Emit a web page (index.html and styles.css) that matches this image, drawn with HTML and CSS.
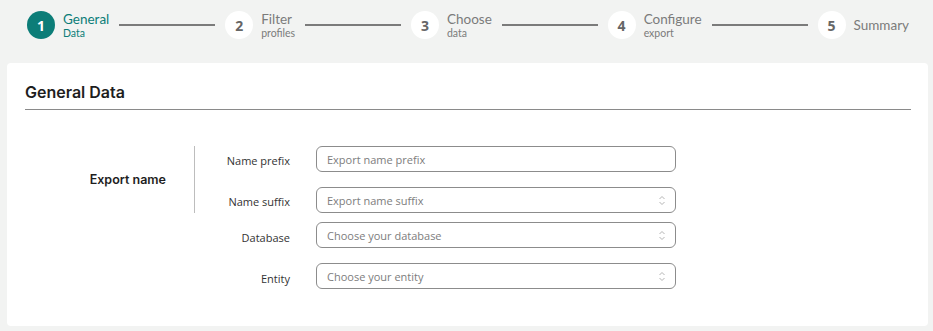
FILE: index.html
```html
<!DOCTYPE html>
<html lang="en">
<head>
  <meta charset="UTF-8">
  <title>Export wizard - General Data</title>
  <link rel="stylesheet" href="styles.css">
</head>
<body>

  <!-- Wizard steps -->
  <div class="stepper">
    <div class="step active">
      <span class="step-num">1</span>
      <div class="step-label">
        <span class="step-title">General</span>
        <span class="step-sub">Data</span>
      </div>
    </div>
    <div class="step-line"></div>
    <div class="step">
      <span class="step-num">2</span>
      <div class="step-label">
        <span class="step-title">Filter</span>
        <span class="step-sub">profiles</span>
      </div>
    </div>
    <div class="step-line"></div>
    <div class="step">
      <span class="step-num">3</span>
      <div class="step-label">
        <span class="step-title">Choose</span>
        <span class="step-sub">data</span>
      </div>
    </div>
    <div class="step-line"></div>
    <div class="step">
      <span class="step-num">4</span>
      <div class="step-label">
        <span class="step-title">Configure</span>
        <span class="step-sub">export</span>
      </div>
    </div>
    <div class="step-line"></div>
    <div class="step">
      <span class="step-num">5</span>
      <div class="step-label">
        <span class="step-title">Summary</span>
      </div>
    </div>
  </div>

  <div class="card">
    <h2 class="card-title">General Data</h2>

    <div class="form">
      <div class="form-group">
        <div class="group-title">Export name</div>
        <div class="group-body">
          <div class="form-row">
            <label class="field-label">Name prefix</label>
            <div class="field">
              <span class="placeholder">Export name prefix</span>
            </div>
          </div>
          <div class="form-row">
            <label class="field-label">Name suffix</label>
            <div class="field">
              <span class="placeholder">Export name suffix</span>
              <svg class="chevrons" width="8" height="11" viewBox="0 0 8 11"><path d="M1.5 4 L4 1.5 L6.5 4 M1.5 7 L4 9.5 L6.5 7" fill="none" stroke="#b5b5b5" stroke-width="1"/></svg>
            </div>
          </div>
        </div>
      </div>

      <div class="form-row single db-row">
        <label class="field-label">Database</label>
        <div class="field">
          <span class="placeholder">Choose your database</span>
          <svg class="chevrons" width="8" height="11" viewBox="0 0 8 11"><path d="M1.5 4 L4 1.5 L6.5 4 M1.5 7 L4 9.5 L6.5 7" fill="none" stroke="#b5b5b5" stroke-width="1"/></svg>
        </div>
      </div>

      <div class="form-row single">
        <label class="field-label">Entity</label>
        <div class="field">
          <span class="placeholder">Choose your entity</span>
          <svg class="chevrons" width="8" height="11" viewBox="0 0 8 11"><path d="M1.5 4 L4 1.5 L6.5 4 M1.5 7 L4 9.5 L6.5 7" fill="none" stroke="#b5b5b5" stroke-width="1"/></svg>
        </div>
      </div>
    </div>
  </div>

</body>
</html>
```

FILE: styles.css
```css
body {
  background-color: #f2f3f2;
  font-family: "Open Sans", Lato, sans-serif;
  margin: 0;
  padding: 0 5px 0 7px;
}

/* stepper */
.stepper {
  display: flex;
  align-items: center;
  padding: 11px 19px 0 20px;
  height: 28px;
  font-family: Lato, "Open Sans", sans-serif;
}
.step {
  display: flex;
  align-items: center;
}
.step-num {
  width: 28px;
  height: 28px;
  border-radius: 50%;
  background: white;
  color: #666;
  font-family: "Open Sans", sans-serif;
  font-weight: bold;
  font-size: 14px;
  display: flex;
  align-items: center;
  justify-content: center;
  margin-right: 8px;
}
.step.active .step-num {
  background: #0c7d78;
  color: white;
}
.step-label {
  display: flex;
  flex-direction: column;
  color: #7b7b7b;
}
.step-title {
  font-size: 13.5px;
  line-height: 16px;
}
.step-sub {
  font-size: 10.5px;
  line-height: 13px;
}
.step.active .step-label {
  color: #0c7d78;
}
.step-line {
  flex: 1;
  height: 2px;
  background: #7b7b7b;
  margin: 0 10px;
}

/* card */
.card {
  margin-top: 24px;
  background: white;
  border-radius: 4px;
  padding: 18px 17px 37px 18px;
}
.card-title {
  font-family: Inter, sans-serif;
  font-weight: 600;
  font-size: 16px;
  line-height: 22px;
  color: #1e1e1e;
  margin: 0;
  padding-bottom: 6px;
  border-bottom: 1px solid #8a8a8a;
}

/* form */
.form {
  margin-top: 36px;
}
.form-group {
  display: flex;
  align-items: center;
}
.group-title {
  width: 141px;
  padding-right: 28px;
  text-align: right;
  font-family: Inter, sans-serif;
  font-weight: 600;
  font-size: 12.5px;
  color: #1e1e1e;
}
.group-body {
  border-left: 1px solid #bdbdbd;
  display: flex;
  flex-direction: column;
  gap: 15px;
}
.form-row {
  display: flex;
  align-items: center;
}
.form-row.single {
  margin-left: 170px;
  margin-top: 15px;
}
.form-row.db-row {
  margin-top: 9px;
}
.field-label {
  width: 95px;
  text-align: right;
  font-size: 11px;
  color: #333;
  margin-right: 26px;
  margin-top: 2px;
}
.form-row.single .field-label {
  margin-top: 4px;
}
.field {
  height: 24px;
  border: 1px solid #8c8c8c;
  border-radius: 6px;
  display: flex;
  align-items: center;
  justify-content: space-between;
  padding: 0 10px;
  width: 338px;
}
.placeholder {
  font-size: 11px;
  color: #7d7d7d;
}
.chevrons {
  margin-right: -1px;
}
```
